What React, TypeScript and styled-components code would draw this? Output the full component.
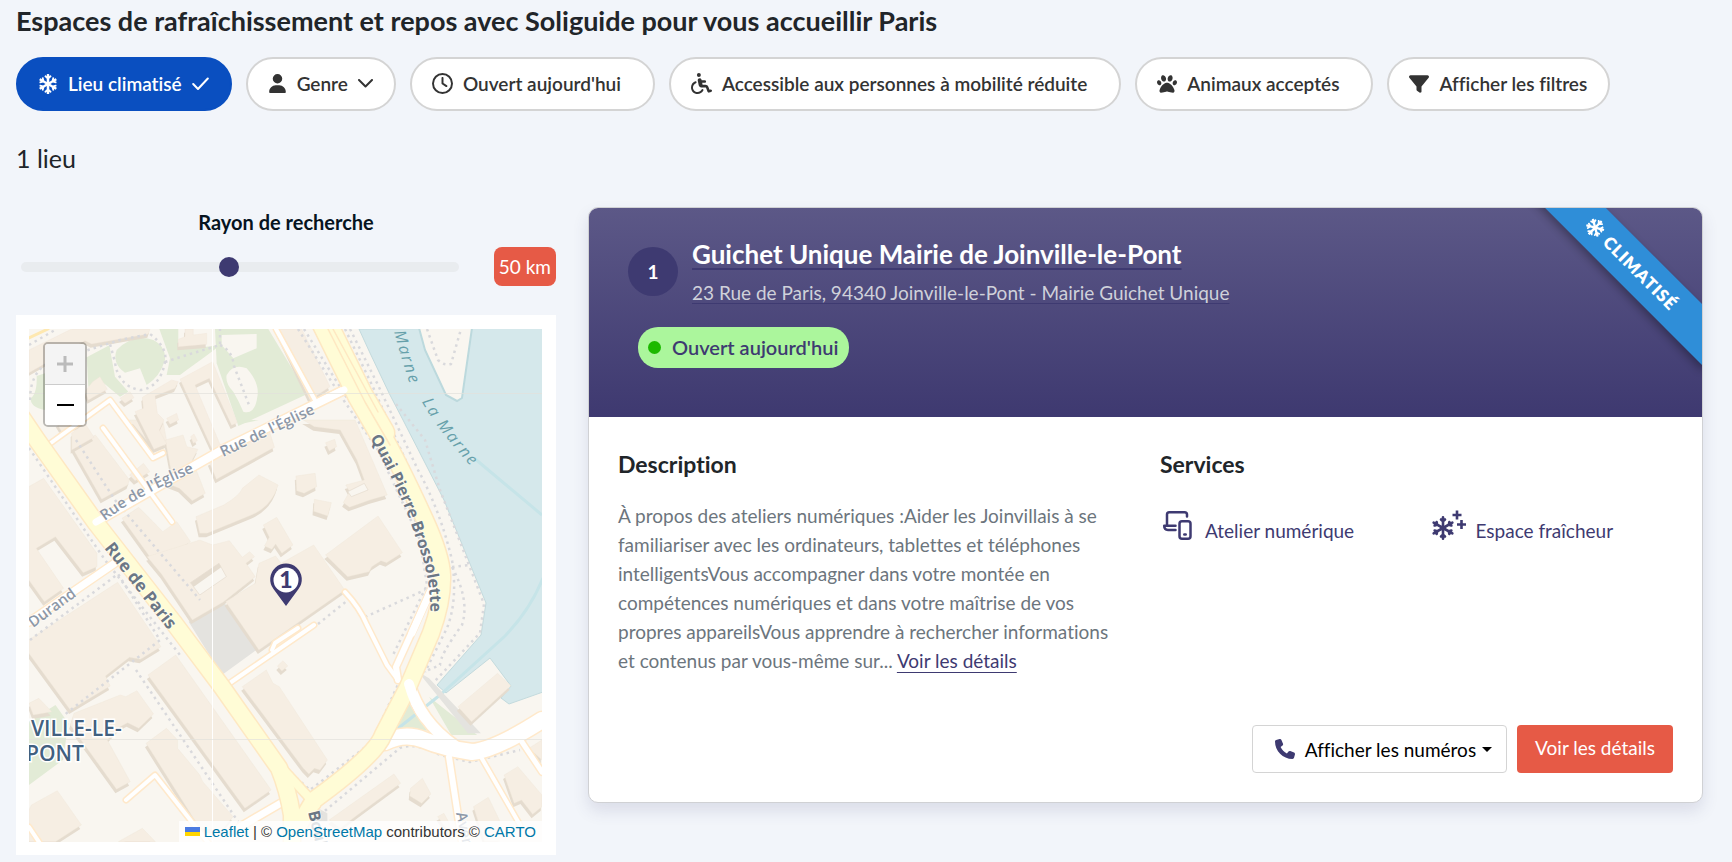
import React, { useState } from 'react';
import styled, { createGlobalStyle } from 'styled-components';
import { FaUser, FaRegClock, FaWheelchair, FaPaw, FaFilter, FaPhone } from 'react-icons/fa6';
import { FaSnowflake } from 'react-icons/fa';

const navy = '#3e3a71';
const coral = '#e65a46';

const GlobalStyle = createGlobalStyle`
  *, *::before, *::after { box-sizing: border-box; }
  body {
    margin: 0;
    background: #f2f5fa;
    color: #212529;
    font-family: Lato, "Noto Sans", sans-serif;
    font-size: 19px;
    line-height: 29px;
    font-variant-ligatures: none;
  }
  h1, h2, h3, p, ul { margin: 0; padding: 0; }
  button { font: inherit; font-variant-ligatures: none; cursor: pointer; }
`;

const Page = styled.main`
  padding: 5px 29px 7px 16px;
`;

const PageTitle = styled.h1`
  font-size: 27px;
  line-height: 32px;
  font-weight: 700;
`;

const Filters = styled.div`
  display: flex;
  flex-wrap: wrap;
  gap: 14px;
  margin-top: 20px;
`;

const FilterButton = styled.button<{ $active?: boolean; $roomy?: boolean }>`
  display: flex;
  align-items: center;
  gap: 10px;
  height: 54px;
  padding: 0 ${p => (p.$roomy ? 32 : 21)}px 1px 20px;
  border: 2px solid ${p => (p.$active ? '#0a4fc0' : '#d4d4d4')};
  border-radius: 27px;
  background: ${p => (p.$active ? '#0a4fc0' : '#fff')};
  color: ${p => (p.$active ? '#fff' : '#333')};
  font-size: 19px;
  font-weight: 600;
  white-space: nowrap;
`;

const ResultCount = styled.h2`
  margin-top: 31px;
  font-size: 25px;
  line-height: 32px;
  font-weight: 400;
`;

const Columns = styled.div`
  display: flex;
  align-items: flex-start;
  gap: 32px;
  margin-top: 33px;
`;

const Sidebar = styled.aside`
  flex: 0 0 540px;
`;

const RadiusLabel = styled.label`
  display: block;
  padding-top: 3px;
  font-size: 20px;
  line-height: 24px;
  font-weight: 700;
  text-align: center;
  color: #06141f;
`;

const RadiusRow = styled.div`
  display: flex;
  align-items: center;
  justify-content: space-between;
  margin-top: 13px;
  padding-left: 5px;
`;

const RadiusRange = styled.input`
  appearance: none;
  flex: 0 1 438px;
  height: 10px;
  margin: 0;
  border-radius: 5px;
  background: #e9ecef;
  &::-webkit-slider-thumb {
    appearance: none;
    width: 20px;
    height: 20px;
    border-radius: 50%;
    background: ${navy};
  }
`;

const RadiusValue = styled.output`
  padding: 5px;
  border-radius: 8px;
  background: ${coral};
  color: #fff;
`;

const MapPanel = styled.section`
  margin-top: 29px;
  padding: 14px 14px 13px 13px;
  background: #fff;
`;

const MapView = styled.div`
  position: relative;
  aspect-ratio: 1;
  overflow: hidden;
  & > svg { display: block; width: 100%; height: 100%; }
`;

const ZoomControl = styled.div`
  position: absolute;
  top: 13px;
  left: 14px;
  display: flex;
  flex-direction: column;
  border: 2px solid rgba(0, 0, 0, 0.25);
  border-radius: 5px;
  background-clip: padding-box;
  overflow: hidden;
`;

const ZoomButton = styled.button`
  display: grid;
  place-items: center;
  width: 40px;
  height: 40px;
  padding: 0;
  border: 0;
  background: #fff;
  color: #000;
  &:disabled { background: #f4f4f4; color: #bbb; }
  & + & { height: 41px; border-top: 1px solid #ccc; }
`;

const Attribution = styled.div`
  position: absolute;
  right: 0;
  bottom: 0;
  display: flex;
  align-items: center;
  gap: 4px;
  padding: 0 6px;
  background: rgba(255, 255, 255, 0.8);
  color: #333;
  font: 15px/21px "Liberation Sans", Arial, sans-serif;
  a { color: #0078a8; text-decoration: none; }
`;

const Card = styled.article`
  flex: 1;
  min-width: 0;
  border: 1px solid #d0d1d4;
  border-radius: 10px;
  background: #fff;
  box-shadow: 0 8px 16px rgba(62, 58, 113, 0.13);
  overflow: hidden;
`;

const CardHeader = styled.header`
  position: relative;
  overflow: hidden;
  padding: 30px 39px 49px;
  background: linear-gradient(#5c5887, #3e3970);
`;

const PlaceHeading = styled.div`
  display: flex;
  align-items: center;
  gap: 14px;
`;

const PlaceNumber = styled.span`
  flex: none;
  width: 50px;
  height: 49px;
  border-radius: 50%;
  background: ${navy};
  color: #fff;
  font-weight: 700;
  line-height: 49px;
  text-align: center;
`;

const PlaceName = styled.h3`
  font-size: 26px;
  line-height: 32px;
  font-weight: 700;
  a {
    color: #fff;
    text-decoration: underline 2px ${navy};
    text-underline-offset: 4px;
  }
`;

const PlaceAddress = styled.p`
  margin-top: 11px;
  line-height: 24px;
  a {
    color: #cfd1da;
    text-decoration: underline 1px ${navy};
    text-underline-offset: 3px;
  }
`;

const OpenBadge = styled.span`
  display: inline-flex;
  align-items: center;
  gap: 11px;
  height: 41px;
  margin: 22px 0 0 10px;
  padding: 0 11px 0 10px;
  border-radius: 20px;
  background: #abf69c;
  color: ${navy};
  font-size: 20px;
  font-weight: 600;
  &::before {
    content: "";
    width: 13px;
    height: 13px;
    border-radius: 50%;
    background: #1cb900;
  }
`;

const Ribbon = styled.span`
  position: absolute;
  top: 36px;
  right: -54px;
  display: flex;
  align-items: center;
  justify-content: center;
  gap: 6px;
  width: 246px;
  height: 43px;
  padding-right: 4px;
  background: #2f8ed8;
  box-shadow: 0 4px 8px rgba(0, 0, 0, 0.3);
  color: #fff;
  font-size: 17px;
  font-weight: 800;
  letter-spacing: 1px;
  text-transform: uppercase;
  transform: rotate(45deg);
`;

const CardBody = styled.div`
  display: grid;
  grid-template-columns: 1fr 1fr;
  gap: 29px;
  padding: 31px 29px 0;
`;

const SectionTitle = styled.h3`
  font-size: 23px;
  line-height: 32px;
  font-weight: 700;
`;

const Description = styled.p`
  margin-top: 21px;
  padding-right: 10px;
  color: #6c757d;
  a {
    color: ${navy};
    text-underline-offset: 4px;
    text-decoration-thickness: 1px;
  }
`;

const Services = styled.ul`
  display: grid;
  grid-template-columns: 1fr 1fr;
  column-gap: 24px;
  margin-top: 29px;
  list-style: none;
  color: ${navy};
`;

const Service = styled.li`
  display: flex;
  align-items: flex-start;
  gap: 10px;
  svg { flex: none; }
  span { margin-top: 7px; }
`;

const CardActions = styled.div`
  display: flex;
  justify-content: flex-end;
  gap: 10px;
  padding: 50px 29px 29px;
`;

const PhoneButton = styled.button`
  display: flex;
  align-items: center;
  height: 48px;
  padding: 0 14px 0 22px;
  border: 1px solid #d4d4d4;
  border-radius: 4px;
  background: #fff;
  color: #000;
  svg { color: ${navy}; margin-right: 10px; }
  &::after {
    content: "";
    margin-left: 6px;
    border: 5px solid transparent;
    border-top-color: #000;
    border-bottom: 0;
  }
`;

const DetailsLink = styled.a`
  height: 48px;
  padding: 0 18px;
  border-radius: 4px;
  background: ${coral};
  color: #fff;
  line-height: 46px;
  text-decoration: none;
`;

const CheckIcon = () => (
  <svg width="17" height="14" viewBox="0 0 17 14" fill="none" stroke="currentColor" strokeWidth="2" strokeLinecap="round" strokeLinejoin="round" aria-hidden="true">
    <path d="M1.200 7 L6 12 L15.800 1.500" />
  </svg>
);

const ChevronIcon = () => (
  <svg width="15" height="9" viewBox="0 0 15 9" fill="none" stroke="currentColor" strokeWidth="2" strokeLinecap="round" strokeLinejoin="round" aria-hidden="true">
    <path d="M1 1 L7.500 7.500 L14 1" />
  </svg>
);

const DevicesIcon = () => (
  <svg width="35" height="32" viewBox="0 0 35 32" fill="none" stroke="currentColor" strokeWidth="2.500" strokeLinecap="round" strokeLinejoin="round" aria-hidden="true">
    <path d="M7 16V5.500Q7 3.200 9.300 3.200H24.500Q27 3.200 27 5.500V7.500" />
    <path d="M15.500 16.800H4.200Q4.200 21 8 21H15.500" />
    <rect x="19.500" y="12.300" width="11" height="17.500" rx="2.500" />
    <path d="M24.300 25.500H25.700" />
  </svg>
);

const FreshIcon = () => (
  <svg width="37" height="32" viewBox="-2 0 37 32" fill="none" stroke="currentColor" strokeWidth="2.600" strokeLinecap="round" strokeLinejoin="round" aria-hidden="true">
    {[0, 60, 120, 180, 240, 300].map(a => (
      <path key={a} transform={`rotate(${a} 12 19)`} d="M12 19V8.200 M10 10.500L12 12.300L14 10.500" />
    ))}
    <circle cx="12" cy="19" r="2.500" fill="currentColor" stroke="none" />
    <path d="M26 1.500V10.500M21.500 6H30.500M30.500 11V20M26 15.500H35" strokeLinecap="butt" />
  </svg>
);

const buildingsSouth = [
  'M78 200L118 175L262 400V440L225 458L150 350L98 385L172 505L120 545L78 480Z',
  'M195 82L258 45L350 180L345 195L275 238Z',
  'M330 295L375 262L440 335L478 305L515 365L440 420L432 452Z',
  'M398 410L437 463L520 600L605 545L690 470L665 430L688 410L675 395L655 412L620 362L575 375L540 360Z',
  'M610 545L690 490L700 430L745 408L760 430L848 375L932 510L700 690Z',
  'M880 405L1022 288L1088 398L1045 428L1030 422L1005 440L998 455L940 470Z',
  'M712 315L748 292L792 375L762 400L745 372L735 388L715 378L728 352Z',
  'M530 290L605 255Q650 225 655 205L700 165L752 195Q735 260 680 285L560 340H540Z',
  'M800 168L852 160L856 200L822 220L802 212Z',
  'M850 238L896 248L886 288L848 274Z',
  'M820 0H960L1047 225L1000 240L945 262L928 248L945 215L935 195L985 180L965 120L920 30L850 20Z',
  'M880 68L905 58L910 80L890 93Z',
  'M565 125L730 40L742 82L585 178Z',
  'M447 60L495 45L505 80L535 88L520 120L555 220L520 242L485 205L450 190L462 150Z',
  'M350 0H440L450 60L415 85Z',
  'M350 165L388 130L405 155L365 182Z',
  'M78 660L318 487L435 680L380 718L350 712L285 768L298 798L190 870L78 700Z',
  'M400 765L475 705L733 1110L662 1165Z',
  'M655 800L720 750L738 790L755 800L885 1020L865 1050L850 1045L835 1062L820 1045Z',
  'M750 738L765 722L778 738L762 753Z',
  'M395 970L450 925L480 960V985L540 1065L548 1085L630 1190L600 1230L540 1225Z',
  'M200 880L325 825L340 830L370 812L415 882L375 925L345 908L325 920L290 960L352 1085L315 1108L190 915Z',
  'M85 1155L155 1112L220 1215L150 1265H78V1170Z',
  'M320 1265L385 1225L420 1265Z',
  'M78 850L105 835L140 875L90 885Z',
  'M1238 860L1345 760L1381 797L1275 905Z',
  'M890 1200L1065 1062L1083 1090L960 1190L920 1225Z',
  'M1110 1105L1142 1075L1165 1122L1140 1150L1108 1128Z',
  'M1280 1160L1320 1132L1350 1200V1265H1310Z',
  'M1363 1065L1400 1040L1465 1125V1160L1440 1183L1410 1140L1390 1150Z',
  'M1430 985L1465 960V1020Z',
  'M1183 1190L1200 1180L1215 1210V1240Z',
];

const buildingsNorth = [
  'M27 90L155 27H390L385 42L215 72L195 62L27 158Z',
  'M218 185L240 170L262 208L205 240L195 215Z',
  'M300 235L330 215L342 233L315 250Z',
  'M345 275L370 265L367 232L455 180L475 185L465 205L405 228L412 280L432 300L418 330L440 372L402 388Z',
  'M480 178L578 125L652 308L635 316L568 175L525 195L605 385L580 395Z',
  'M475 58L495 50V27H520V45L560 40V73L475 80Z',
  'M440 295L470 280L476 300L450 313Z',
  'M512 350L522 342L532 362L520 370Z',
  'M110 310L195 290V310L125 335Z',
  'M155 340L195 310L222 352L155 390Z',
  'M768 27H845L930 200L870 240Z',
];

const casedRoads: [string, number][] = [
  ['M96 522L222 450L344 390', 8],
  ['M48 445L110 400L153 458L163 453', 4],
  ['M103 428L172 522', 4],
  ['M276 329L316 402', 4],
  ['M29 622L115 563', 7],
  ['M224 687L314 625', 4],
  ['M272 650L275 643L298 628', 4],
  ['M345 592Q360 608 367 625L387 665L398 680', 4],
  ['M431 590L396 667L398 680', 6],
  ['M409 683Q420 722 455 746', 11],
  ['M385 742Q405 732 424 740T472 752Q495 750 542 720', 16],
  ['M449 757L462 842', 6],
  ['M481 757L520 825', 4],
  ['M522 742L542 772', 5],
  ['M126 800L155 775L210 845', 4],
  ['M240 827L281 803', 7],
  ['M29 827L41 845', 4],
];

const mainRoads: [string, number][] = [
  ['M324 322L360 395L382 433', 24],
  ['M360 395L380 430Q400 465 425 520Q441 555 442 575Q443 600 431 633L408 687L383 735Q376 755 314 800L296 830', 16],
  ['M20 415L37 440L96 523L174 623L222 687L279 768Q288 790 292 815V850', 16],
  ['M281 767L316 805', 8],
];

const footpaths = [
  'M29 448L105 560L180 655',
  'M76 440L115 500L200 600',
  'M30 640L118 574L160 640L63 716',
  'M136 670L180 735L245 832',
  'M29 345L55 330',
  'M30 400Q30 372 50 362L120 340L150 334Q168 348 165 362Q160 388 140 390Q118 386 115 362L110 344',
  'M165 362L190 354L220 345V329',
  'M220 345Q232 350 234 366L249 405',
  'M345 329L372 385L410 470',
  'M350 329L378 385L418 470Q440 510 452 560Q458 600 447 628L425 672',
  'M298 329L340 395L378 450L420 540L427 585L393 655',
  'M304 329L345 395L384 450L424 540',
  'M396 404L425 440L440 490L484 604L480 633L434 682',
  'M452 567Q470 600 462 625Q440 655 440 665L424 672',
  'M452 567L470 565',
  'M318 624L348 600', 'M365 617L425 590',
  'M282 765L310 790L372 742L400 680',
  'M320 815L400 748Q415 742 440 755L470 762L520 750',
  'M427 329L438 360Q444 366 451 364L461 329',
];

const labelFont = { fontFamily: '"Open Sans", "Noto Sans", sans-serif' };

function CityMap() {
  return (
    <svg viewBox="29 329 513 513" role="img" aria-label="Plan de Joinville-le-Pont">
      <rect x="29" y="329" width="513" height="513" fill="#f9f6f0" />

      <g fill="#e2ebd6">
        <g transform="translate(20 320) scale(.33333)">
          <path d="M200 112L268 76L285 170L325 215L300 230L240 180L205 200Z" />
          <path d="M290 90Q340 40 400 60Q438 80 435 120Q420 170 380 195L360 145L315 158Q275 130 290 90Z" />
          <path d="M418 27H475V80H560L602 75L555 110L500 150L480 165H440L450 115Z" />
          <path d="M585 27H745L862 222L655 318L590 130Z" />
          <path d="M50 168L75 160V270Q30 262 32 235Q52 220 50 168Z" />
          <path fill="#f9f6f0" d="M605 45L710 42V85L640 115L605 75ZM620 165Q640 130 680 145Q720 190 712 230Q705 285 670 275Q655 240 640 215Q615 190 620 165Z" />
        </g>
        <g transform="translate(0 420) scale(.36990 .33333)">
          <path d="M78 905L150 855L185 910L170 1020L78 1095ZM640 0H700L650 12Z" />
          <path d="M1090 850L1120 855L1170 930L1070 938ZM1160 830L1290 945L1220 945Z" />
        </g>
      </g>

      <path fill="#d5e8eb" stroke="#c3dadd" d="M359 329L370 353L390 395L403 420L444 500L486 603L481 635L437 685L446 693L490 658L511 686L501 698L509 704L543 692V328Z" />
      <path fill="#f9f6f0" stroke="#bcd9dd" strokeWidth="2" d="M419 328L425 350L446 395L457 401L462 398L472 328Z" />
      <path fill="none" stroke="#c6e4e8" strokeWidth="3" d="M474 458L542 515M543 578Q530 610 505 636L440 695L396 730" />

      <g fill="#e4e3df" transform="translate(0 420) scale(.36990 .33333)">
        <path d="M510 605L605 545L693 690L600 765ZM1130 755L1160 775L1300 940H1265ZM860 1165L885 1180V1205H840Z" />
      </g>

      <g transform="translate(0 420) scale(.36990 .33333)">
        <g fill="#e5dccf" transform="translate(-3 12)">{buildingsSouth.map(d => <path key={d} d={d} />)}</g>
        <g fill="#f6eee3" stroke="#efe5d8">{buildingsSouth.map(d => <path key={d} d={d} />)}</g>
        <path fill="#f9f6f0" stroke="#e5dccf" strokeWidth="2" d="M515 488L592 430L612 470L540 525ZM940 215L985 190L995 210L950 230Z" />
        <path fill="#e5dccf" d="M515 488L592 430L598 442L524 500Z" />
      </g>
      <g transform="translate(20 320) scale(.33333)">
        <g fill="#e5dccf" transform="translate(-3 11)">{buildingsNorth.map(d => <path key={d} d={d} />)}</g>
        <g fill="#f6eee3" stroke="#efe5d8">{buildingsNorth.map(d => <path key={d} d={d} />)}</g>
      </g>

      <g fill="none" stroke="#d9d9dc" strokeWidth="2.500" strokeDasharray="2.500 4">
        {footpaths.map(d => <path key={d} d={d} />)}
      </g>

      <g fill="none" strokeLinecap="round" strokeLinejoin="round">
        {casedRoads.map(([d, w]) => <path key={d} d={d} stroke="#ffe9cb" strokeWidth={w + 3} />)}
        {casedRoads.map(([d, w]) => <path key={d} d={d} stroke="#fff" strokeWidth={w} />)}
        {mainRoads.map(([d, w]) => <path key={d} d={d} stroke="#fee8c2" strokeWidth={w + 3} />)}
        {mainRoads.map(([d, w]) => <path key={d} d={d} stroke="#fffcd6" strokeWidth={w} />)}
        <path d="M29 338L48 329" stroke="#fee8b0" strokeWidth="3" />
        <path d="M328 329L365 402L390 445M333 329L378 412" stroke="#fee8c2" strokeWidth="1.500" />
        <path d="M96 522L222 450L344 390M431 590L412 633" stroke="#fff" strokeWidth="7" />
        <path d="M409 684Q415 705 425 718" stroke="#fff" strokeWidth="10" />
      </g>

      <path d="M212.500 329V842" stroke="#fff" />
      <path d="M29 393.500H542M29 739.500H542" stroke="#e3e1dc" strokeOpacity=".7" />

      <defs>
        <path id="paris" d="M104 548L180 645" />
        <path id="eglise-ouest" d="M105 521Q145 490 210 466" />
        <path id="eglise-est" d="M223 457L335 404" />
        <path id="quai" d="M370 438Q403 495 418 545Q434 585 429 630" />
        <path id="marne-nord" d="M388 306Q397 350 420 412" />
        <path id="marne-sud" d="M422 402Q440 434 480 476" />
        <path id="durand" d="M33 628L90 586" />
        <path id="boulevard" d="M308 812L324 880" />
        <path id="avenue" d="M456 813L470 880" />
      </defs>
      <g style={labelFont} fontWeight="700" stroke="#fff" strokeOpacity=".5" strokeWidth="2" paintOrder="stroke">
        <g fill="#6b7785" fontSize="16">
          <text fontSize="17"><textPath href="#paris">Rue de Paris</textPath></text>
          <text><textPath href="#quai">Quai Pierre Brossolette</textPath></text>
          <text><textPath href="#boulevard">Boul</textPath></text>
        </g>
        <g fill="#8d98a8" fontSize="15" fontWeight="600">
          <text><textPath href="#eglise-ouest">Rue de l'Église</textPath></text>
          <text><textPath href="#eglise-est">Rue de l'Église</textPath></text>
          <text><textPath href="#durand">Durand</textPath></text>
          <text><textPath href="#avenue">Aven</textPath></text>
        </g>
      </g>
      <g style={labelFont} fontSize="16" fontWeight="500" fontStyle="italic" letterSpacing="2" fill="#66a0aa">
        <text><textPath href="#marne-nord">La Marne</textPath></text>
        <text><textPath href="#marne-sud">La Marne</textPath></text>
      </g>
      <g style={labelFont} fontSize="21" fontWeight="600" fill="#41607f" stroke="#fff" strokeWidth="3" paintOrder="stroke">
        <text x="31" y="736">VILLE-LE-</text>
        <text x="26" y="761">PONT</text>
      </g>

      <path fill={navy} d="M286 606L273.500 589A15.800 15.800 0 1 1 298.500 589Z" />
      <circle cx="286" cy="580" r="12.500" fill="#fff" />
      <text x="286" y="588" textAnchor="middle" fontFamily="Lato, sans-serif" fontSize="23" fontWeight="900" fill={navy}>1</text>
    </svg>
  );
}

export default function App() {
  const [radius, setRadius] = useState(50);
  return (
    <>
      <GlobalStyle />
      <Page>
        <PageTitle>Espaces de rafraîchissement et repos avec Soliguide pour vous accueillir Paris</PageTitle>
        <Filters>
          <FilterButton $active type="button" aria-pressed="true"><FaSnowflake size={20} />Lieu climatisé<CheckIcon /></FilterButton>
          <FilterButton type="button"><FaUser size={19} />Genre<ChevronIcon /></FilterButton>
          <FilterButton $roomy type="button"><FaRegClock size={21} />Ouvert aujourd'hui</FilterButton>
          <FilterButton $roomy type="button"><FaWheelchair size={21} />Accessible aux personnes à mobilité réduite</FilterButton>
          <FilterButton $roomy type="button"><FaPaw size={20} />Animaux acceptés</FilterButton>
          <FilterButton type="button"><FaFilter size={20} />Afficher les filtres</FilterButton>
        </Filters>
        <ResultCount>1 lieu</ResultCount>
        <Columns>
          <Sidebar>
            <RadiusLabel htmlFor="radius">Rayon de recherche</RadiusLabel>
            <RadiusRow>
              <RadiusRange id="radius" type="range" min={5} max={100} value={radius} onChange={e => setRadius(Number(e.target.value))} />
              <RadiusValue htmlFor="radius">{radius} km</RadiusValue>
            </RadiusRow>
            <MapPanel>
              <MapView>
                <CityMap />
                <ZoomControl>
                  <ZoomButton type="button" disabled aria-label="Zoomer">
                    <svg width="18" height="18" viewBox="0 0 18 18" stroke="currentColor" strokeWidth="3"><path d="M9 1V17M1 9H17" /></svg>
                  </ZoomButton>
                  <ZoomButton type="button" aria-label="Dézoomer">
                    <svg width="18" height="18" viewBox="0 0 18 18" stroke="currentColor" strokeWidth="2"><path d="M1 9H18" /></svg>
                  </ZoomButton>
                </ZoomControl>
                <Attribution>
                  <svg width="15" height="9" viewBox="0 0 15 9" aria-hidden="true"><path fill="#4c7be1" d="M0 0h15v5H0z" /><path fill="#ffd500" d="M0 5h15v4H0z" /></svg>
                  <span>
                    <a href="#leaflet">Leaflet</a> | © <a href="#osm">OpenStreetMap</a> contributors © <a href="#carto">CARTO</a>
                  </span>
                </Attribution>
              </MapView>
            </MapPanel>
          </Sidebar>
          <Card>
            <CardHeader>
              <PlaceHeading>
                <PlaceNumber>1</PlaceNumber>
                <div>
                  <PlaceName><a href="#fiche">Guichet Unique Mairie de Joinville-le-Pont</a></PlaceName>
                  <PlaceAddress><a href="#adresse">23 Rue de Paris, 94340 Joinville-le-Pont - Mairie Guichet Unique</a></PlaceAddress>
                </div>
              </PlaceHeading>
              <OpenBadge>Ouvert aujourd'hui</OpenBadge>
              <Ribbon><FaSnowflake size={19} />Climatisé</Ribbon>
            </CardHeader>
            <CardBody>
              <section>
                <SectionTitle>Description</SectionTitle>
                <Description>
                  À propos des ateliers numériques :Aider les Joinvillais à se familiariser avec les ordinateurs, tablettes et téléphones intelligentsVous accompagner dans votre montée en compétences numériques et dans votre maîtrise de vos propres appareilsVous apprendre à rechercher informations et contenus par vous-même sur... <a href="#details">Voir les détails</a>
                </Description>
              </section>
              <section>
                <SectionTitle>Services</SectionTitle>
                <Services>
                  <Service><DevicesIcon /><span>Atelier numérique</span></Service>
                  <Service><FreshIcon /><span>Espace fraîcheur</span></Service>
                </Services>
              </section>
            </CardBody>
            <CardActions>
              <PhoneButton type="button"><FaPhone size={20} />Afficher les numéros</PhoneButton>
              <DetailsLink href="#details">Voir les détails</DetailsLink>
            </CardActions>
          </Card>
        </Columns>
      </Page>
    </>
  );
}
